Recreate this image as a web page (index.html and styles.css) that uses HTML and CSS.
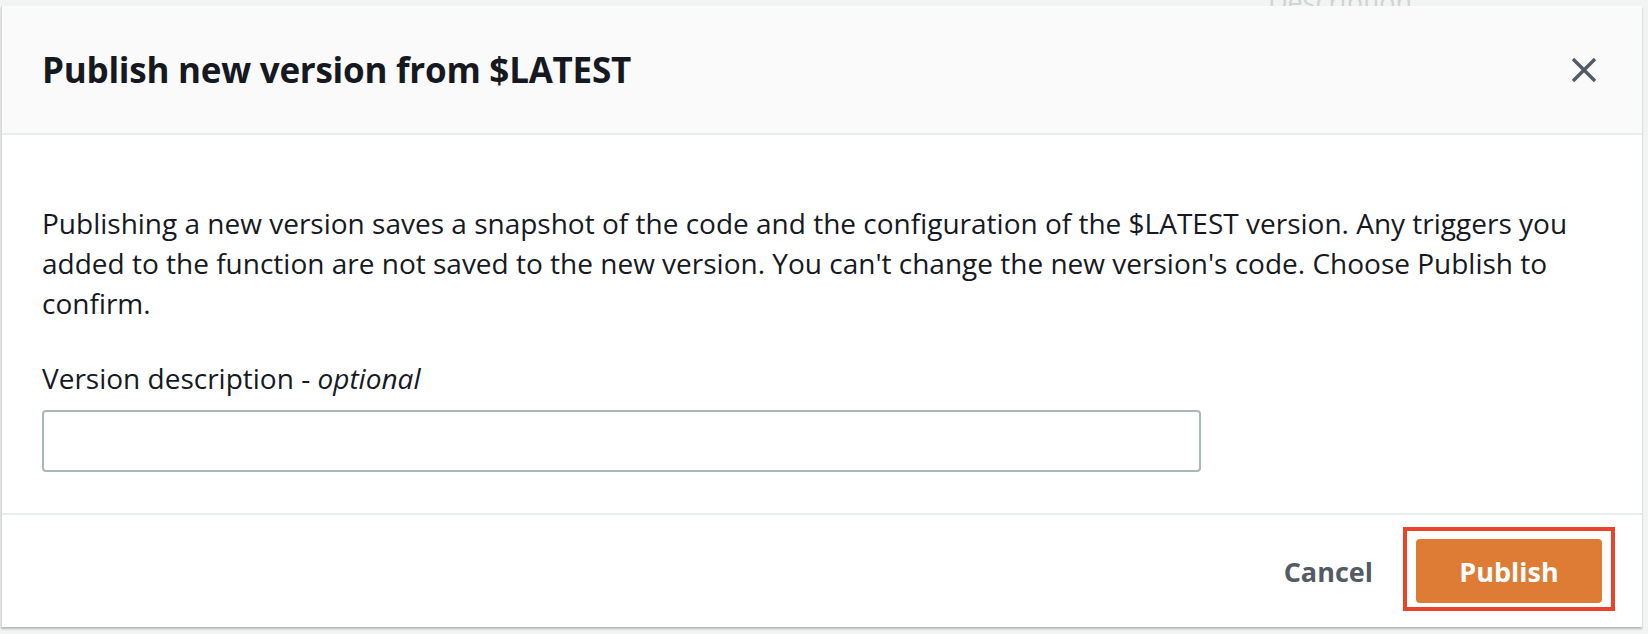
FILE: index.html
```html
<!DOCTYPE html>
<html lang="en">
<head>
  <meta charset="UTF-8">
  <meta name="viewport" content="width=device-width, initial-scale=1.0">
  <title>Publish new version</title>
  <link rel="stylesheet" href="styles.css">
</head>
<body>
  <div class="page-behind">Description</div>

  <div class="modal">
    <div class="modal-header">
      <h2>Publish new version from $LATEST</h2>
      <button class="close-btn" aria-label="Close">
        <svg width="26" height="26" viewBox="0 0 26 26">
          <path d="M2 2 L24 24 M24 2 L2 24" stroke="#545b64" stroke-width="3.4" fill="none"/>
        </svg>
      </button>
    </div>

    <div class="modal-body">
      <p>Publishing a new version saves a snapshot of the code and the configuration of the $LATEST version. Any triggers you added to the function are not saved to the new version. You can't change the new version's code. Choose Publish to confirm.</p>
      <label class="field-label" for="desc">Version description - <i>optional</i></label>
      <input class="text-input" id="desc" type="text">
    </div>

    <div class="modal-footer">
      <button class="link-btn">Cancel</button>
      <div class="highlight-wrap">
        <button class="primary-btn">Publish</button>
        <span class="highlight"></span>
      </div>
    </div>
  </div>
</body>
</html>
```

FILE: styles.css
```css
body {
  margin: 0;
  padding: 6px 6px 7px 1px;
  background-color: #f2f3f3;
  font-family: "Open Sans", "Liberation Sans", sans-serif;
  color: #16191f;
  position: relative;
}
.page-behind {
  position: absolute;
  top: -17px;
  left: 1268px;
  font-size: 27px;
  color: #cfd3d3;
  z-index: 0;
}
.modal {
  position: relative;
  z-index: 1;
  background: #fff;
  border-left: 1px solid #d5dbdb;
  height: 621px;
  box-sizing: border-box;
  display: flex;
  flex-direction: column;
  box-shadow: 0 2px 2px rgba(0, 0, 0, 0.25);
}
.modal-header {
  height: 129px;
  box-sizing: border-box;
  background: #fafafa;
  border-bottom: 2px solid #eaeded;
  padding: 0 40px;
  display: flex;
  align-items: center;
  justify-content: space-between;
}
.modal-header h2 {
  margin: 0;
  font-size: 35px;
  font-weight: 700;
  letter-spacing: -0.25px;
}
.close-btn {
  width: 36px;
  height: 36px;
  padding: 0;
  border: none;
  background: none;
  display: flex;
  align-items: center;
  justify-content: center;
}
.modal-body {
  padding: 68px 40px 41px 40px;
  display: flex;
  flex-direction: column;
  font-size: 28px;
  line-height: 40px;
}
.modal-body p {
  margin: 0 0 35px 0;
}
.field-label {
  margin-bottom: 12px;
}
.text-input {
  width: 1159px;
  height: 62px;
  box-sizing: border-box;
  border: 2px solid #aab7b8;
  border-radius: 4px;
  font-size: 28px;
  padding: 0 16px;
}
.modal-footer {
  border-top: 2px solid #eaeded;
  padding: 24px 40px;
  display: flex;
  justify-content: flex-end;
  align-items: center;
  gap: 3px;
}
.link-btn {
  border: none;
  background: none;
  font-family: inherit;
  font-size: 27px;
  font-weight: 700;
  color: #545b64;
  padding: 0 40px;
  height: 64px;
}
.highlight-wrap {
  position: relative;
}
.primary-btn {
  display: block;
  width: 186px;
  height: 64px;
  border: none;
  border-radius: 4px;
  background-color: #de7b35;
  color: #fff;
  font-family: inherit;
  font-size: 27px;
  font-weight: 700;
}
.highlight {
  position: absolute;
  top: -12px;
  bottom: -8px;
  left: -13px;
  right: -13px;
  border: 4px solid #e9432c;
}
```
